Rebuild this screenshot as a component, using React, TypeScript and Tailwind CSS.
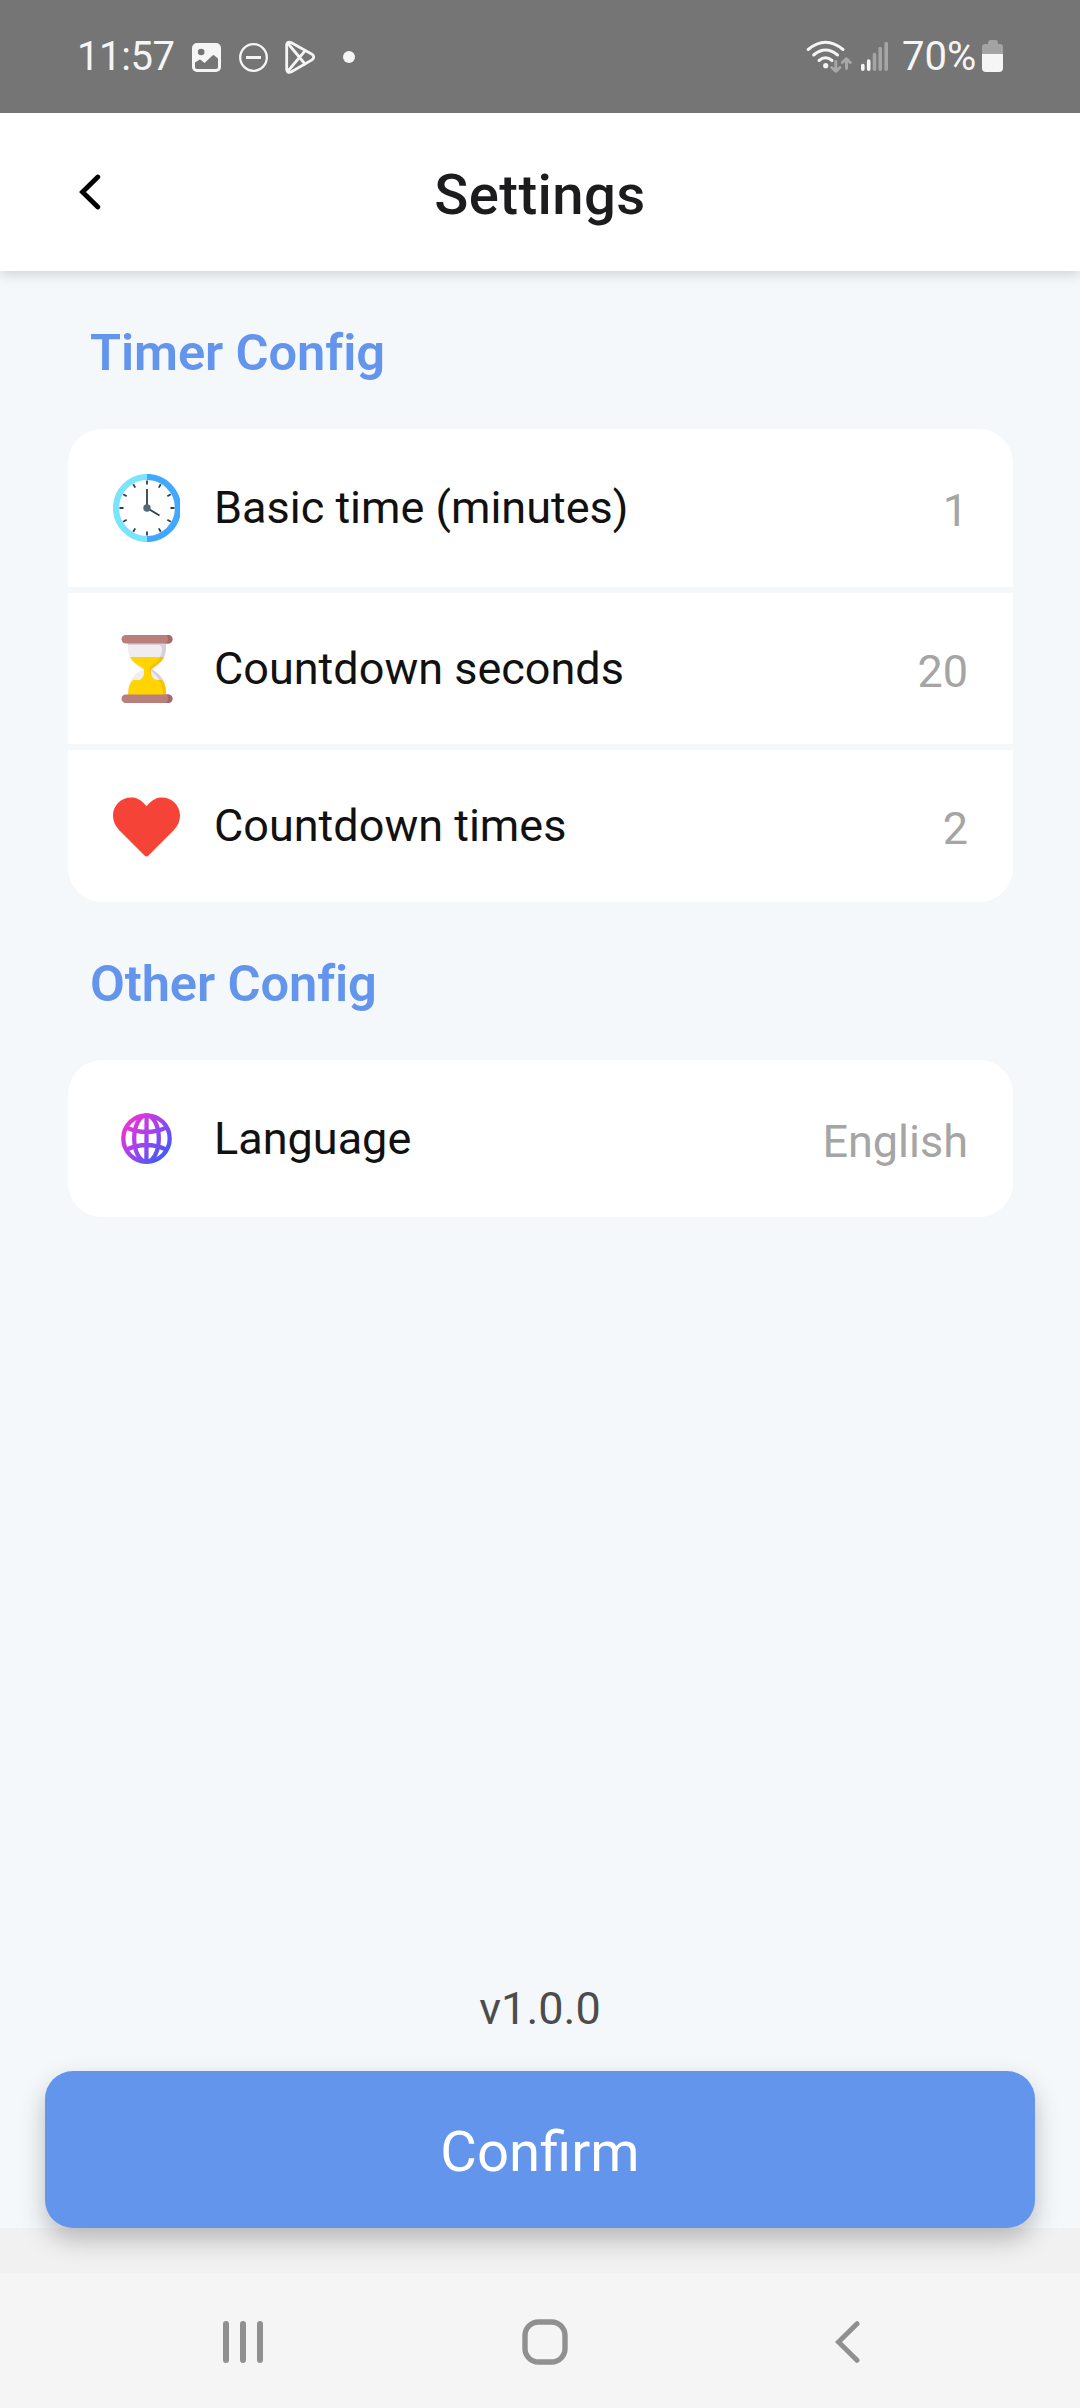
import type { ReactNode } from 'react';

function StatusBar() {
  return (
    <div className="flex h-[113px] shrink-0 items-center justify-between bg-[#757575] pr-[77px] pl-[77px] text-[40px] leading-[46px] text-[#f5f5f5]">
      <div className="flex items-center">
        <span className="w-[114px] whitespace-nowrap tracking-[-0.4px]">11:57</span>
        <svg className="h-[34px] w-[170px]" viewBox="191 39 170 34" fill="none">
          <path
            fillRule="evenodd"
            fill="#f5f5f5"
            d="M197 42h19a5 5 0 0 1 5 5v19a5 5 0 0 1-5 5h-19a5 5 0 0 1-5-5V47a5 5 0 0 1 5-5Zm4.200 5.700a3.300 3.300 0 1 0 0 6.600a3.300 3.300 0 1 0 0-6.600ZM195 61.500V66a2 2 0 0 0 2 2h19a2 2 0 0 0 2-2v-8.500l-4-3.200q-.8-.5-1.500 .1L204.500 62l-4-3.200q-.8-.5-1.500 .1Z"
          />
          <circle cx="253.500" cy="56.500" r="13.300" stroke="#f5f5f5" strokeWidth="2.300" />
          <path d="M246 56.500h15" stroke="#f5f5f5" strokeWidth="3" />
          <g stroke="#f5f5f5" strokeWidth="2.800" strokeLinejoin="round" strokeLinecap="round">
            <path d="M286.700 43.300Q287.500 40.200 291 41.600L312 53.200Q315.500 56 312 58.900L291 71Q287.500 72.300 286.700 69Z" />
            <path d="M288 42.500L305 63M288 70L305 49.800" />
          </g>
          <circle cx="349" cy="56" r="6" fill="#f5f5f5" />
        </svg>
      </div>
      <div className="flex items-center">
        <svg className="h-[36px] w-[88px]" viewBox="804 39 88 36" fill="none" strokeLinecap="round">
          <g stroke="#f5f5f5" strokeWidth="3">
            <path d="M808.200 49.500Q825.500 35 843 49.500" />
            <path d="M813.700 55Q825.500 45 837.500 55" />
            <path d="M819 60.500Q825.500 55 832 60.500" />
          </g>
          <circle cx="825.700" cy="65.700" r="2.600" fill="#f5f5f5" />
          <g stroke="#a8a8a8" strokeWidth="2.900" strokeLinejoin="round">
            <path d="M835.800 61.500V71M831.700 67.500L835.800 71.300L840 67.500" />
            <path d="M846.500 68.500V59M842.300 62.500L846.500 58.700L850.300 62.500" />
          </g>
          <g strokeWidth="3.600">
            <path d="M862.800 65.600V69.300M868.700 61V69.300" stroke="#f5f5f5" />
            <path d="M874.500 54.600V69.300M880.200 48.600V69.300M886.200 43.600V69.300" stroke="#a5a5a5" />
          </g>
        </svg>
        <span className="ml-[10px] w-[79px] whitespace-nowrap">70%</span>
        <svg className="h-[33px] w-[22px]" viewBox="981 40 22 33">
          <path d="M988 43q0-3 2.500-3h5q2.500 0 2.500 3v1h2q3 0 3 3v7h-21v-7q0-3 3-3h3Z" fill="#a3a3a3" />
          <path d="M982 54h21v14q0 4-4 4h-13q-4 0-4-4Z" fill="#f5f5f5" />
        </svg>
      </div>
    </div>
  );
}

function ClockIcon() {
  return (
    <svg className="h-[68px] w-[67px]" viewBox="0 0 67 68">
      <path d="M34 3A31 31 0 0 0 34 65" fill="#fff" stroke="#7be4fa" strokeWidth="6.200" />
      <path d="M34 3A31 31 0 0 1 34 65" fill="#fff" stroke="#40a9ff" strokeWidth="6.200" />
      <g stroke="#2c414d" strokeWidth="1.800">
        {[0, 30, 60, 90, 120, 150, 180, 210, 240, 270, 300, 330].map((a) => (
          <path key={a} d="M34 6.500V10.500" transform={`rotate(${a} 34 34)`} />
        ))}
        <path d="M34 15V34L46.500 41.500" fill="none" />
      </g>
      <circle cx="34" cy="34" r="3.700" fill="#546a75" />
    </svg>
  );
}

function HourglassIcon() {
  return (
    <svg className="h-[68px] w-[67px]" viewBox="0 0 67 68">
      <path d="M15 6H53V13C53 24 46 29 39 34C46 39 53 45 53 57V62H15V57C15 45 22 39 30 34C22 29 15 24 15 13Z" fill="#efedf0" />
      <path d="M15 7H53V13C53 24 46 29 39 34C46 39 53 45 53 57H50C50 47 43 40 36 34C43 29 49 22 49 14Q49 10 45 10H15Z" fill="#d8d0d6" />
      <path d="M17 22H51C49 27 42 31 38 34V38Q39 44 44 45H49Q53 50 53 60H15Q15 50 20 45H27Q31 42 31 38V34C26 31 19 27 17 22Z" fill="#ffd400" />
      <path d="M47 22H51C49 27 42 31 38 34V39Q36 36 37 31C42 29 46 26 47 22ZM45 45H49Q53 50 53 60H50Q51 50 45 45Z" fill="#f9bf00" />
      <rect x="8.500" y="0" width="51" height="8.500" rx="4.200" fill="#b97f7d" />
      <path d="M53 0H55.300a4.200 4.200 0 0 1 0 8.500H52Q55 7.500 55 4Q55 1 53 0Z" fill="#a76968" />
      <rect x="8.500" y="59.500" width="51" height="8.500" rx="4.200" fill="#b97f7d" />
      <path d="M53 59.500H55.300a4.200 4.200 0 0 1 0 8.500H52Q55 67 55 63.500Q55 60.500 53 59.500Z" fill="#a76968" />
    </svg>
  );
}

function HeartIcon() {
  return (
    <svg className="mt-px h-[60px] w-[67px]" viewBox="0 0 67 60">
      <path
        d="M33.500 9.200C40 2 44 .5 49 .5C59 .5 67 8.500 67 18.500C67 24 65 28.500 61 33L35.500 58.500Q33.500 60.300 31.500 58.500L6 33C2 28.500 0 24 0 18.500C0 8.500 8 .5 18 .5C23 .5 27.500 2 33.500 9.200Z"
        fill="#f54337"
      />
    </svg>
  );
}

function GlobeIcon() {
  return (
    <svg className="mx-2 h-[51px] w-[51px]" viewBox="0 0 51 51" fill="none">
      <defs>
        <linearGradient id="globe" gradientUnits="userSpaceOnUse" x1="6" y1="8" x2="45" y2="43">
          <stop offset="0" stopColor="#ee33d2" />
          <stop offset="0.500" stopColor="#9f44ee" />
          <stop offset="1" stopColor="#3d5df6" />
        </linearGradient>
      </defs>
      <g stroke="url(#globe)" strokeWidth="4.300">
        <circle cx="25.500" cy="25.500" r="23.200" />
        <ellipse cx="25.500" cy="25.500" rx="12.300" ry="23.200" />
        <path d="M25.600 2L25.400 49M5.500 14.500Q25.500 23.500 45.500 14.500M5.500 36.500Q25.500 27.500 45.500 36.500" />
      </g>
    </svg>
  );
}

function SectionTitle({ children }: { children: ReactNode }) {
  return (
    <h2 className="flex h-[158px] items-center pt-[6px] pl-[90px] text-[50.6px] leading-[60px] font-semibold tracking-[-0.1px] text-[#6495ed]">
      {children}
    </h2>
  );
}

function Row({ icon, label, value, height }: { icon: ReactNode; label: string; value: string; height: string }) {
  return (
    <div className={`flex items-center bg-white pr-[45px] pl-[45px] ${height}`}>
      {icon}
      <span className="ml-[34px] flex-1 text-[45px] leading-[52px] text-[#111]">{label}</span>
      <span className="pt-[6px] text-[45px] leading-[52px] text-[#a5a5a5]">{value}</span>
    </div>
  );
}

export default function App() {
  return (
    <div className="flex h-[2408px] w-[1080px] flex-col overflow-hidden bg-[#f4f8fb] font-[Roboto,sans-serif]">
      <StatusBar />
      <header className="z-10 grid h-[158px] shrink-0 grid-cols-[1fr_auto_1fr] items-center bg-white shadow-[0_4px_12px_rgba(0,0,0,0.14)] [clip-path:inset(0_0_-30px_0)]">
        <svg className="ml-[79px] h-[36px] w-[24px]" viewBox="0 0 24 36" fill="none">
          <path d="M18.800 3L3.500 18L18.800 33" stroke="#000" strokeWidth="4.800" strokeLinecap="round" />
        </svg>
        <h1 className="pt-[6px] text-[56.25px] leading-[66px] font-medium tracking-[0.4px] text-[#1c1c1e]">Settings</h1>
      </header>
      <main className="flex flex-1 flex-col">
        <SectionTitle>Timer Config</SectionTitle>
        <div className="mr-[67px] ml-[68px] flex flex-col gap-[6px] overflow-hidden rounded-[34px]">
          <Row icon={<ClockIcon />} label="Basic time (minutes)" value="1" height="h-[158px]" />
          <Row icon={<HourglassIcon />} label="Countdown seconds" value="20" height="h-[151px]" />
          <Row icon={<HeartIcon />} label="Countdown times" value="2" height="h-[152px]" />
        </div>
        <SectionTitle>Other Config</SectionTitle>
        <div className="mr-[67px] ml-[68px] overflow-hidden rounded-[34px]">
          <Row icon={<GlobeIcon />} label="Language" value="English" height="h-[157px]" />
        </div>
        <p className="mt-auto mb-[36px] text-center text-[45px] leading-[53px] text-[#4c4c4c]">v1.0.0</p>
      </main>
      <div className="h-[202px] shrink-0 bg-linear-to-b from-[#f4f8fb] from-[157px] to-[#f1f1f1] to-[157px] px-[45px]">
        <button className="block h-[157px] w-full rounded-[28px] bg-[#6495ed] pt-[4px] text-[56.25px] leading-[66px] text-white shadow-[0_12px_26px_-1px_rgba(0,0,0,0.25)]">
          Confirm
        </button>
      </div>
      <nav className="z-10 flex h-[135px] shrink-0 items-start bg-[#f5f5f5] pt-[46px] pl-[223px]">
        <svg className="mt-[2px] h-[42px] w-[40px]" viewBox="0 0 40 42">
          <path d="M3 3V39M20 3V39M37 3V39" stroke="#909090" strokeWidth="6" strokeLinecap="round" />
        </svg>
        <svg className="ml-[259px] h-[46px] w-[46px]" viewBox="0 0 46 46">
          <rect x="3" y="3" width="40" height="40" rx="13.500" fill="none" stroke="#909090" strokeWidth="5.400" />
        </svg>
        <svg className="ml-[267px] mt-[2px] h-[42px] w-[25px]" viewBox="0 0 25 42">
          <path d="M22 2.700L3.500 21L22 39.300" fill="none" stroke="#909090" strokeWidth="5" strokeLinecap="round" />
        </svg>
      </nav>
    </div>
  );
}
